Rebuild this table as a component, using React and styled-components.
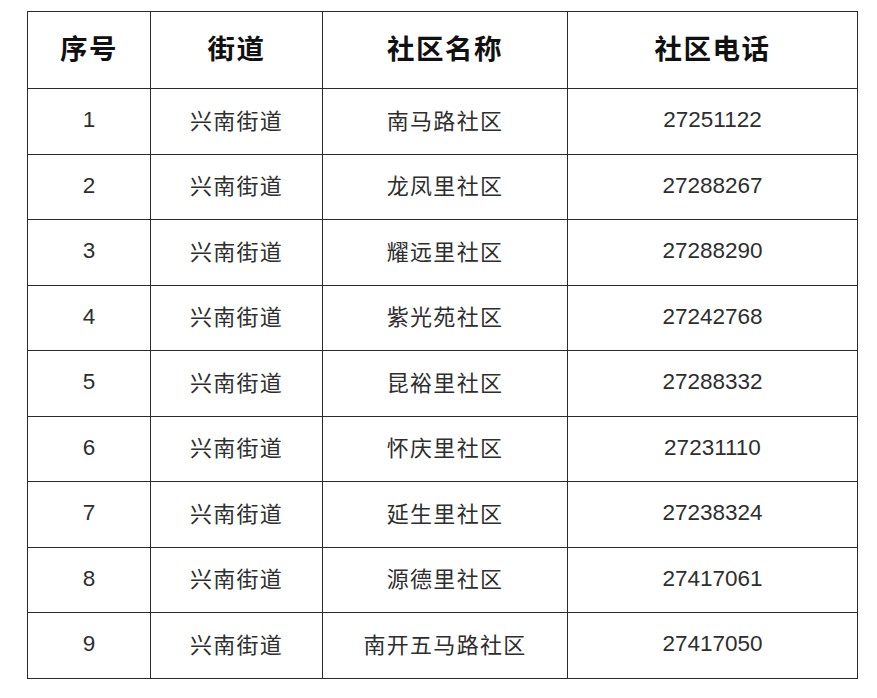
import React from "react";
import styled, { createGlobalStyle } from "styled-components";

const Global = createGlobalStyle`
  html, body {
    margin: 0;
    padding: 0;
    background: #fff;
  }
  body {
    font-family: "Noto Sans CJK SC", sans-serif;
  }
`;

const Page = styled.div`
  padding: 11px 0 0 27px;
`;

const Grid = styled.div`
  display: grid;
  grid-template-columns: 123px 172px 245px 290px;
  grid-template-rows: 77px repeat(9, 65.5px);
  width: max-content;
  border-top: 1px solid #2a2a2a;
  border-left: 1px solid #2a2a2a;
`;

const Cell = styled.div`
  display: flex;
  align-items: center;
  justify-content: center;
  border-right: 1px solid #2a2a2a;
  border-bottom: 1px solid #2a2a2a;
  line-height: 1.2;
  color: ${(p) => (p.$head ? "#111" : "#2e2e2e")};
  font-size: ${(p) => (p.$head ? "27.5px" : "22px")};
  font-weight: ${(p) => (p.$head ? 700 : 400)};
  letter-spacing: ${(p) => (p.$head ? "1.5px" : "1.3px")};
  padding-bottom: ${(p) => (p.$head ? "6px" : "5px")};
`;

const Num = styled.span`
  font-family: "Liberation Sans", Arial, sans-serif;
  font-size: 22.5px;
  letter-spacing: 0;
  margin-top: 2px;
`;

const head = ["序号", "街道", "社区名称", "社区电话"];

const rows = [
  ["1", "南马路社区", "27251122"],
  ["2", "龙凤里社区", "27288267"],
  ["3", "耀远里社区", "27288290"],
  ["4", "紫光苑社区", "27242768"],
  ["5", "昆裕里社区", "27288332"],
  ["6", "怀庆里社区", "27231110"],
  ["7", "延生里社区", "27238324"],
  ["8", "源德里社区", "27417061"],
  ["9", "南开五马路社区", "27417050"],
];

const App = () => {
  return (
    <Page>
      <Global />
      <Grid>
        {head.map((h) => (
          <Cell $head key={h}>
            {h}
          </Cell>
        ))}
        {rows.map(([n, name, tel]) => (
          <React.Fragment key={n}>
            <Cell>
              <Num>{n}</Num>
            </Cell>
            <Cell>兴南街道</Cell>
            <Cell>{name}</Cell>
            <Cell>
              <Num>{tel}</Num>
            </Cell>
          </React.Fragment>
        ))}
      </Grid>
    </Page>
  );
};

export default App;
